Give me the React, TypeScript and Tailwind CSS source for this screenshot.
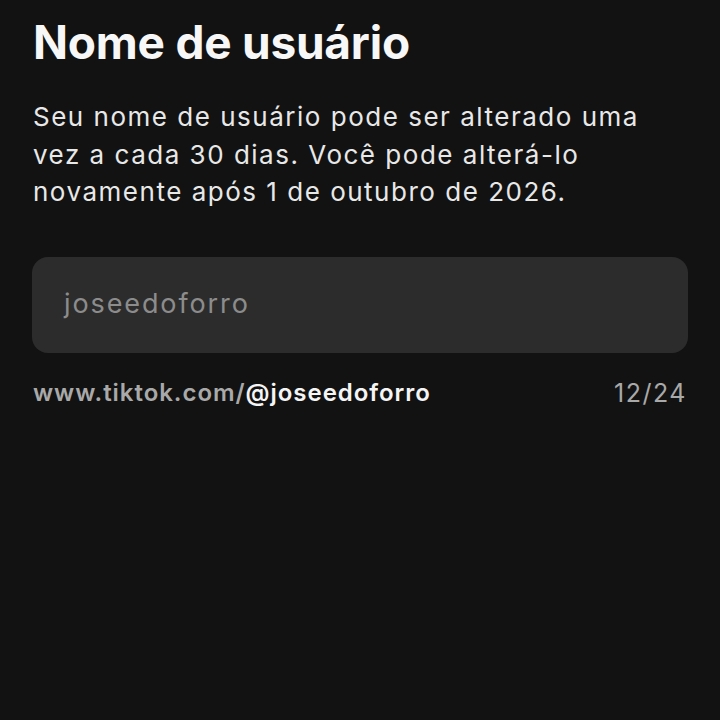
import React from "react";

export default function App() {
  return (
    <div className="w-[720px] h-[720px] bg-[#121212] overflow-hidden" style={{ fontFamily: "Inter, 'Liberation Sans', sans-serif" }}>
      <div className="pl-[33px] pr-[32px] pt-[14px]">
        <h1 className="text-[46px] leading-[56px] font-bold tracking-[-0.005em] text-[#f7f7f7]">Nome de usuário</h1>
        <p className="mt-[28px] w-[650px] text-[26px] leading-[37.5px] text-[#e8e8e8] tracking-[0.058em]">
          Seu nome de usuário pode ser alterado uma vez a cada 30 dias. Você pode alterá-lo novamente após 1 de outubro de 2026.
        </p>
        <div className="mt-[46px] h-[96px] rounded-[16px] bg-[#2c2c2c] flex items-center px-[32px] -ml-px">
          <span className="text-[27px] tracking-[0.07em] text-[#8c8c8c]">joseedoforro</span>
        </div>
        <div className="mt-[22px] flex items-center justify-between">
          <div className="text-[24px] font-semibold tracking-[0.04em]">
            <span className="text-[#a9a9a9]">www.tiktok.com/</span>
            <span className="text-[#f5f5f5]">@joseedoforro</span>
          </div>
          <span className="text-[25px] tracking-[0.06em] text-[#a9a9a9] mr-[1px]">12/24</span>
        </div>
      </div>
    </div>
  );
}
